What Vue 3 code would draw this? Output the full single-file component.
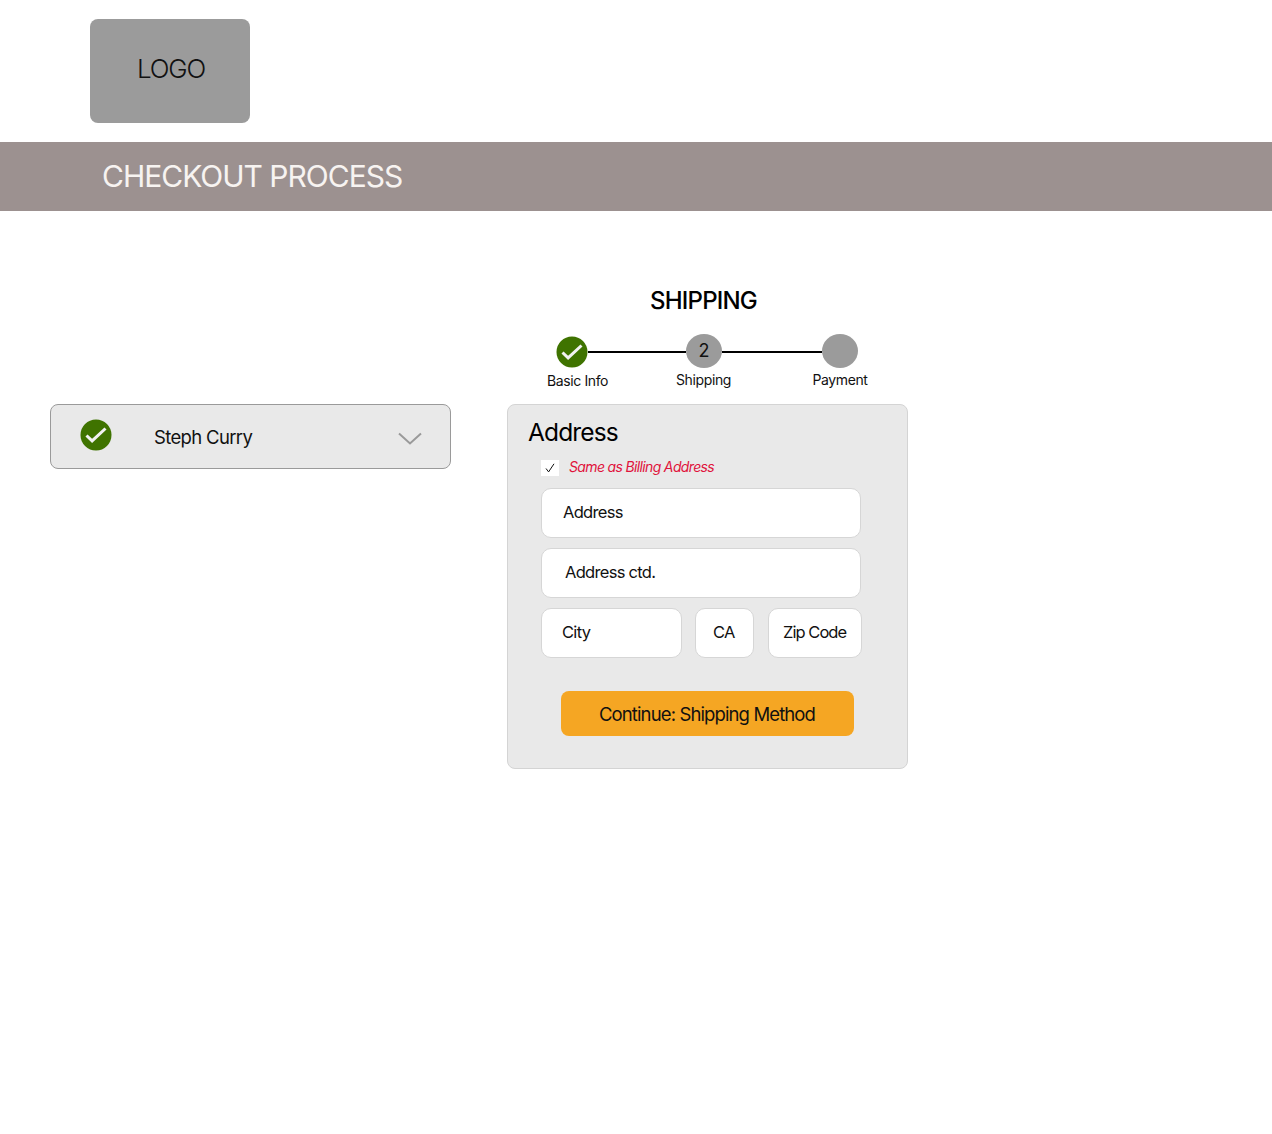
<script setup>
const steps = [
  { label: 'Basic Info', cls: 'l1' },
  { label: 'Shipping', cls: 'l2' },
  { label: 'Payment', cls: 'l3' }
]
</script>

<template>
  <div class="page">
    <header class="top">
      <div class="logo"><span>LOGO</span></div>
    </header>
    <div class="band"><h1>CHECKOUT PROCESS</h1></div>
    <main class="main">
      <section class="left">
        <div class="summary">
          <svg class="ok" width="32" height="32" viewBox="0 0 32 32">
            <circle cx="16" cy="16" r="15.5" fill="#3f7300" />
            <path d="M6.5 16.5l5.6 5.4L25.5 9.5" fill="none" stroke="#f2f2f2" stroke-width="3" />
          </svg>
          <span class="name">Steph Curry</span>
          <svg class="chev" width="24" height="14" viewBox="0 0 24 14">
            <path d="M1 1.5l11 10 11-10" fill="none" stroke="#9a9a9a" stroke-width="2" />
          </svg>
        </div>
      </section>
      <section class="right">
        <h2>SHIPPING</h2>
        <div class="stepper">
          <svg class="ok" width="32" height="32" viewBox="0 0 32 32">
            <circle cx="16" cy="16" r="15.5" fill="#3f7300" />
            <path d="M6.5 16.5l5.6 5.4L25.5 9.5" fill="none" stroke="#f2f2f2" stroke-width="3" />
          </svg>
          <i class="line l-a"></i>
          <div class="dot">2</div>
          <i class="line l-b"></i>
          <div class="dot"></div>
        </div>
        <div class="labels">
          <span v-for="s in steps" :key="s.label" :class="s.cls">{{ s.label }}</span>
        </div>
        <div class="card">
          <h3>Address</h3>
          <label class="same">
            <span class="box">
              <svg width="12" height="12" viewBox="0 0 12 12">
                <path d="M2 6.5l2.6 3.4L10 1.8" fill="none" stroke="#111" stroke-width="1" />
              </svg>
            </span>
            <em>Same as Billing Address</em>
          </label>
          <div class="field f1">Address</div>
          <div class="field f2">Address ctd.</div>
          <div class="row">
            <div class="field city">City</div>
            <div class="field state">CA</div>
            <div class="field zip">Zip Code</div>
          </div>
          <button class="cta" type="button">Continue: Shipping Method</button>
        </div>
      </section>
    </main>
  </div>
</template>

<style>
html, body { margin: 0; background: #fff; }
</style>

<style scoped>
.page {
  min-height: 1134px;
  font-family: Inter, "Liberation Sans", sans-serif;
  color: #000;
  background: #fff;
}
.top { height: 142px; box-sizing: border-box; padding: 19px 0 0 90px; }
.logo {
  width: 160px; height: 104px; border-radius: 8px; background: #9b9b9b;
  display: flex; align-items: center; justify-content: center;
}
.logo span {
  font-size: 26px; font-weight: 300; letter-spacing: -1.2px; color: #111;
  position: relative; left: 1px; top: -3px;
}
.band { height: 69px; background: #9c9190; display: flex; align-items: center; padding-left: 102px; }
.band h1 { margin: 0 0 2px; font-size: 30px; font-weight: 400; letter-spacing: -1px; color: #f7f3f1; white-space: nowrap; }
.main { display: flex; padding-left: 50px; }
.left { width: 401px; padding-top: 193px; margin-right: 56px; }
.summary {
  height: 65px; box-sizing: border-box; border: 1px solid #9a9a9a; border-radius: 8px; background: #e9e9e9;
  display: flex; align-items: center; padding-left: 29px; position: relative;
}
.summary .ok { position: relative; top: -2px; }
.name { margin-left: 42px; font-size: 18.5px; letter-spacing: -0.65px; color: #111; }
.chev { margin-left: auto; margin-right: 28px; margin-top: 5px; }
.right { width: 401px; }
h2 {
  margin: 0; padding-top: 75px; height: 30px; line-height: 30px; font-size: 24px; font-weight: 500;
  letter-spacing: -0.8px; text-align: center; width: 393px;
}
.stepper { display: flex; align-items: center; margin: 18px 0 0 49px; height: 34px; }
.stepper .ok { position: relative; top: 1px; }
.line { display: block; height: 2px; background: #000; position: relative; top: 1px; }
.l-a { width: 98px; }
.l-b { width: 100px; }
.dot {
  width: 36px; height: 34px; border-radius: 50%; background: #9b9b9b;
  display: flex; align-items: center; justify-content: center; font-size: 18px; line-height: 1; color: #111;
  position: relative;
}
.labels { position: relative; height: 36px; font-size: 14px; letter-spacing: -0.38px; color: #111; display: flex; }
.labels span { width: 100px; text-align: center; white-space: nowrap; line-height: 18px; }
.labels .l1 { margin: 4px 0 0 20.5px; }
.labels .l2 { margin: 3px 0 0 26px; }
.labels .l3 { margin: 3px 0 0 36.5px; }
.card {
  height: 365px; box-sizing: border-box; border: 1px solid #d4d4d4; border-radius: 8px; background: #e9e9e9;
  padding: 0 0 0 33px;
}
h3 {
  margin: 0 0 0 -13px; padding-top: 12px; height: 30px; line-height: 30px; font-size: 24.5px; font-weight: 400;
  letter-spacing: -0.85px; color: #000;
}
.same { display: flex; align-items: center; height: 20px; margin-top: 9px; }
.box {
  width: 18px; height: 16px; background: #fff; display: flex; align-items: center; justify-content: center; margin-top: 3px;
}
.same em { margin-left: 10px; font-size: 14px; font-style: italic; letter-spacing: -0.65px; color: #e0143c; }
.field {
  box-sizing: border-box; height: 50px; width: 320px; background: #fff; border: 1px solid #d6d6d6; border-radius: 10px;
  display: flex; align-items: center; font-size: 16.5px; letter-spacing: -0.7px; color: #111; padding-bottom: 2px;
}
.f1 { margin-top: 12px; padding-left: 21px; }
.f2 { margin-top: 10px; padding-left: 23px; }
.row { display: flex; margin-top: 10px; width: 321px; }
.city { width: 141px; padding-left: 20px; }
.state { width: 59px; margin-left: 13px; padding-left: 17px; }
.zip { width: 94px; margin-left: 14px; padding-left: 14px; white-space: nowrap; letter-spacing: -0.95px; }
.cta {
  display: block; width: 293px; height: 45px; margin: 33px 0 0 20px; border: 0; border-radius: 8px; background: #f5a623;
  font: inherit; font-size: 18.5px; letter-spacing: -0.88px; color: #111; text-align: center; padding: 0 1px 0 0;
}
</style>
